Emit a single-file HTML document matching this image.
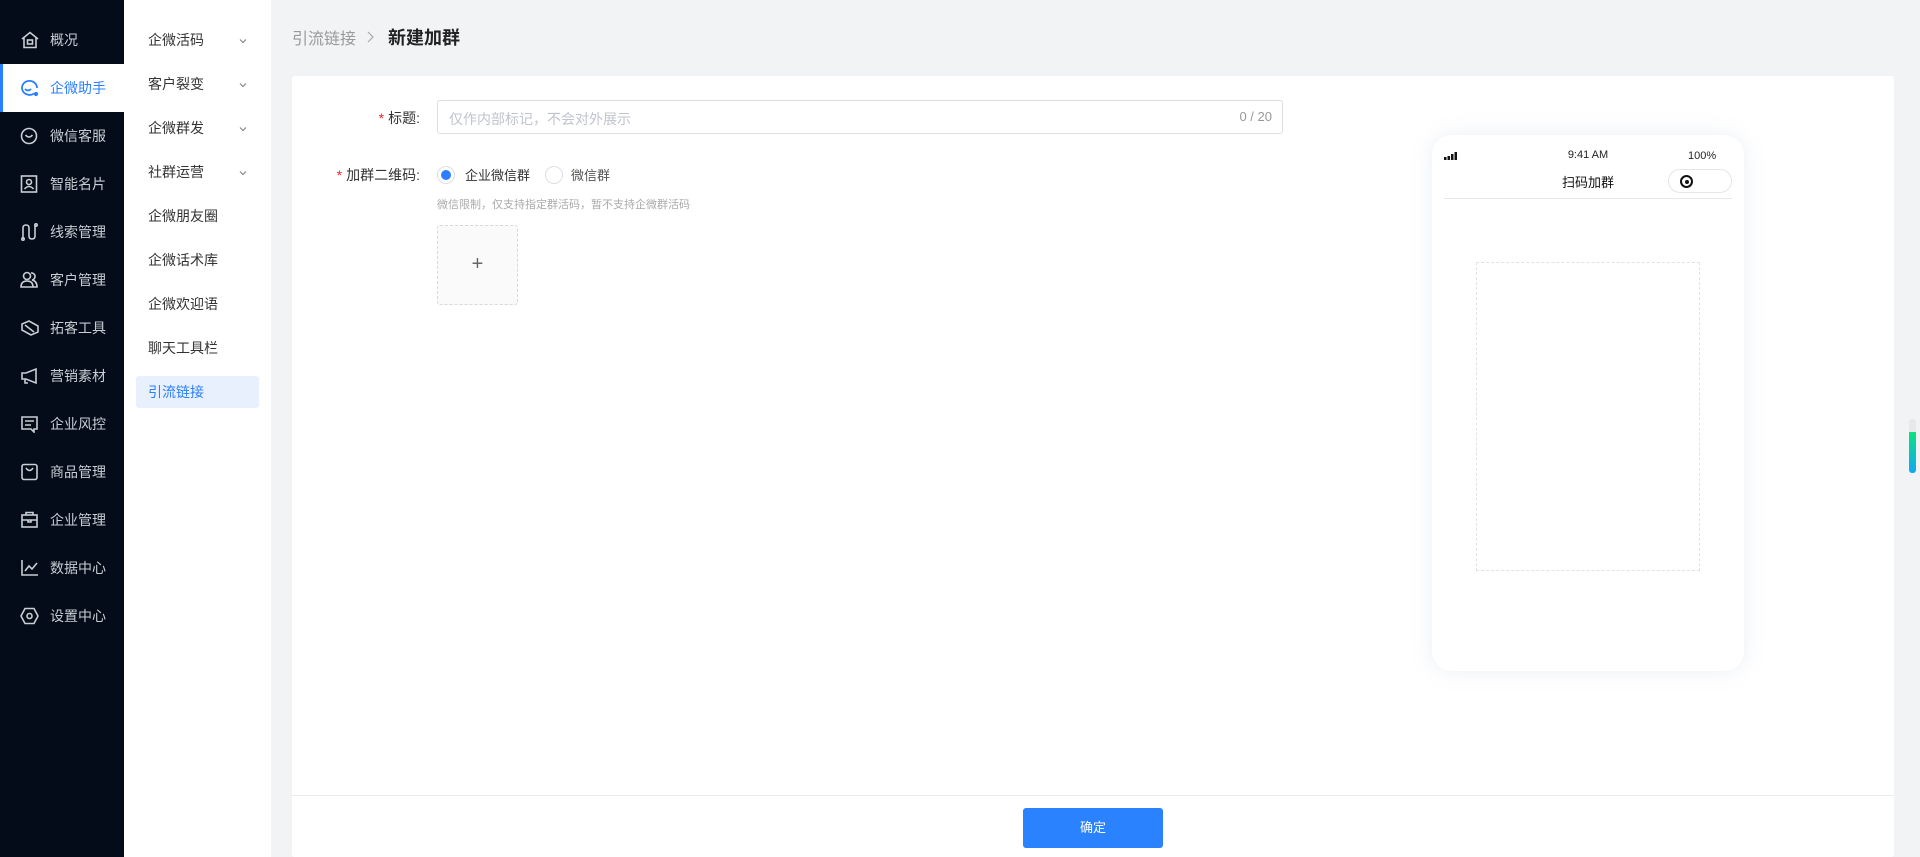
<!DOCTYPE html>
<html><head><meta charset="utf-8"><style>
*{margin:0;padding:0;box-sizing:border-box}
body{width:1920px;height:857px;overflow:hidden;background:#f2f3f5;font-family:"Liberation Sans","Noto Sans CJK SC",sans-serif;position:relative}
.side{position:absolute;left:0;top:0;width:124px;height:857px;background:#030c18}
.si{position:absolute;left:0;width:124px;height:48px;color:#c9cdd4;font-size:14px;display:flex;align-items:center}
.si svg{position:absolute;left:20px;top:15px}
.si span{position:absolute;left:50px}
.si.act{background:#fff;color:#2a7fff}
.si.act:before{content:"";position:absolute;left:0;top:0;width:3px;height:48px;background:#2a7fff}
.sub{position:absolute;left:124px;top:0;width:147px;height:857px;background:#fff}
.sb{position:absolute;left:12px;width:123px;height:32px;font-size:14px;color:#333;display:flex;align-items:center;padding-left:12px}
.sb.act{background:#e8f0fd;color:#2a7fff;border-radius:3px}
.chev{position:absolute;left:102px;top:12px}
.card{position:absolute;left:292px;top:76px;width:1602px;height:781px;background:#fff;border-radius:3px}
.lbl{position:absolute;font-size:14px;color:#333;text-align:right}
.lbl b{color:#f5222d;font-weight:normal;margin-right:4px}
</style></head><body>
<div class="side">
<div class="si" style="top:16px"><svg width="20" height="18" viewBox="0 0 20 18" fill="none" stroke="#c9cdd4" stroke-width="1.6"><path d="M2 8L10 1.5 18 8M4 6.5V16.5H16V6.5"/><rect x="7.5" y="9" width="5" height="4"/></svg><span>概况</span></div>
<div class="si act" style="top:64px"><svg width="20" height="18" viewBox="0 0 20 18" fill="none" stroke="#2a7fff" stroke-width="1.8"><path d="M14 14.5A7.5 7 0 1 1 17 9"/><path d="M5 10q3 3 6 0"/><circle cx="16" cy="15" r="1.2" fill="#2a7fff"/></svg><span>企微助手</span></div>
<div class="si" style="top:112px"><svg width="20" height="18" viewBox="0 0 20 18" fill="none" stroke="#c9cdd4" stroke-width="1.6"><circle cx="9" cy="9" r="7.5"/><path d="M5.5 8q3.5 4 7 0"/></svg><span>微信客服</span></div>
<div class="si" style="top:160px"><svg width="20" height="18" viewBox="0 0 20 18" fill="none" stroke="#c9cdd4" stroke-width="1.6"><rect x="1.5" y="1" width="15" height="16"/><circle cx="9" cy="7" r="2.5"/><path d="M4.5 14q4.5-5 9 0"/></svg><span>智能名片</span></div>
<div class="si" style="top:208px"><svg width="20" height="18" viewBox="0 0 20 18" fill="none" stroke="#c9cdd4" stroke-width="1.6"><path d="M3 16V5q0-3 3-3t3 3v8q0 3 3 3t3-3V2"/><circle cx="3" cy="16" r="1.2"/><circle cx="16" cy="2" r="1.2"/></svg><span>线索管理</span></div>
<div class="si" style="top:256px"><svg width="20" height="18" viewBox="0 0 20 18" fill="none" stroke="#c9cdd4" stroke-width="1.6"><circle cx="7" cy="5" r="3.5"/><path d="M1 16q0-6 6-6t6 6z"/><path d="M11 2a3.5 3.5 0 0 1 1 7q5 1 5 7h-4"/></svg><span>客户管理</span></div>
<div class="si" style="top:304px"><svg width="20" height="18" viewBox="0 0 20 18" fill="none" stroke="#c9cdd4" stroke-width="1.6"><path d="M2 5l7-3 9 5v6l-7 3-9-5z"/><path d="M5 6l9 7"/></svg><span>拓客工具</span></div>
<div class="si" style="top:352px"><svg width="20" height="18" viewBox="0 0 20 18" fill="none" stroke="#c9cdd4" stroke-width="1.6"><path d="M2 6h4l10-4v14L6 12H2z"/><path d="M5 12v4h3"/></svg><span>营销素材</span></div>
<div class="si" style="top:400px"><svg width="20" height="18" viewBox="0 0 20 18" fill="none" stroke="#c9cdd4" stroke-width="1.6"><path d="M2 2h15v12h-3v3l-3-3H2z"/><path d="M5 6h9M5 10h6"/></svg><span>企业风控</span></div>
<div class="si" style="top:448px"><svg width="20" height="18" viewBox="0 0 20 18" fill="none" stroke="#c9cdd4" stroke-width="1.6"><rect x="2" y="1.5" width="15" height="15" rx="2"/><path d="M6 5q3.5 5 7 0"/></svg><span>商品管理</span></div>
<div class="si" style="top:496px"><svg width="20" height="18" viewBox="0 0 20 18" fill="none" stroke="#c9cdd4" stroke-width="1.6"><rect x="2" y="4" width="15" height="12"/><path d="M6 4V1.5h7V4M2 9h15M8 9v2h3V9"/></svg><span>企业管理</span></div>
<div class="si" style="top:544px"><svg width="20" height="18" viewBox="0 0 20 18" fill="none" stroke="#c9cdd4" stroke-width="1.6"><path d="M2 1v15h16M5 12l4-5 3 3 5-6"/></svg><span>数据中心</span></div>
<div class="si" style="top:592px"><svg width="20" height="18" viewBox="0 0 20 18" fill="none" stroke="#c9cdd4" stroke-width="1.6"><path d="M5 1.5h9l4 7.5-4 7.5H5L1 9z"/><circle cx="9.5" cy="9" r="2.5"/></svg><span>设置中心</span></div>
</div>
<div class="sub">
<div class="sb" style="top:24px">企微活码<svg class="chev" width="10" height="10" viewBox="0 0 10 10" fill="none" stroke="#888" stroke-width="1.2"><path d="M2 3.5l3 3 3-3"/></svg></div>
<div class="sb" style="top:68px">客户裂变<svg class="chev" width="10" height="10" viewBox="0 0 10 10" fill="none" stroke="#888" stroke-width="1.2"><path d="M2 3.5l3 3 3-3"/></svg></div>
<div class="sb" style="top:112px">企微群发<svg class="chev" width="10" height="10" viewBox="0 0 10 10" fill="none" stroke="#888" stroke-width="1.2"><path d="M2 3.5l3 3 3-3"/></svg></div>
<div class="sb" style="top:156px">社群运营<svg class="chev" width="10" height="10" viewBox="0 0 10 10" fill="none" stroke="#888" stroke-width="1.2"><path d="M2 3.5l3 3 3-3"/></svg></div>
<div class="sb" style="top:200px">企微朋友圈</div>
<div class="sb" style="top:244px">企微话术库</div>
<div class="sb" style="top:288px">企微欢迎语</div>
<div class="sb" style="top:332px">聊天工具栏</div>
<div class="sb act" style="top:376px">引流链接</div>
</div>
<div style="position:absolute;left:292px;top:25px;font-size:16px;color:#999">引流链接</div>
<svg style="position:absolute;left:365px;top:31px" width="10" height="12" viewBox="0 0 10 12" fill="none" stroke="#aaa" stroke-width="1.2"><path d="M3 1l5 5-5 5"/></svg>
<div style="position:absolute;left:388px;top:24px;font-size:18px;color:#222;font-weight:bold">新建加群</div>
<div class="card"></div>
<div class="lbl" style="left:340px;top:108px;width:80px"><b>*</b>标题:</div>
<div style="position:absolute;left:437px;top:100px;width:846px;height:34px;border:1px solid #dcdfe6;border-radius:3px;font-size:14px;color:#c0c4cc;padding:8px 11px">仅作内部标记，不会对外展示<span style="position:absolute;right:10px;top:8px;color:#999;font-size:13px">0 / 20</span></div>
<div class="lbl" style="left:300px;top:165px;width:120px"><b>*</b>加群二维码:</div>
<div style="position:absolute;left:437px;top:166px;width:18px;height:18px;border:1px solid #dcdfe6;border-radius:50%;background:#fff"><div style="position:absolute;left:3px;top:3px;width:10px;height:10px;border-radius:50%;background:#2a7fff"></div></div>
<div style="position:absolute;left:465px;top:165px;font-size:13px;color:#333">企业微信群</div>
<div style="position:absolute;left:545px;top:166px;width:18px;height:18px;border:1px solid #dcdfe6;border-radius:50%"></div>
<div style="position:absolute;left:571px;top:165px;font-size:13px;color:#555">微信群</div>
<div style="position:absolute;left:437px;top:196px;font-size:11px;color:#aaa">微信限制，仅支持指定群活码，暂不支持企微群活码</div>
<div style="position:absolute;left:437px;top:225px;width:81px;height:80px;border:1px dashed #d9d9d9;border-radius:3px;background:#fafafa;text-align:center;line-height:76px;font-size:20px;color:#666;font-weight:300">+</div>
<div style="position:absolute;left:1432px;top:135px;width:312px;height:536px;background:#fff;border-radius:20px;box-shadow:0 0 20px rgba(180,190,210,.25)">
<svg style="position:absolute;left:12px;top:17px" width="14" height="8"><rect x="0" y="5" width="2.5" height="3" fill="#111"/><rect x="3.5" y="4" width="2.5" height="4" fill="#111"/><rect x="7" y="2" width="2.5" height="6" fill="#111"/><rect x="10.5" y="0" width="2.5" height="8" fill="#111"/></svg>
<div style="position:absolute;left:0;width:312px;top:14px;text-align:center;font-size:11px;color:#222">9:41 AM</div>
<div style="position:absolute;left:256px;top:15px;font-size:11px;color:#222">100%</div>
<div style="position:absolute;left:0;width:312px;top:37px;text-align:center;font-size:13px;color:#111">扫码加群</div>
<div style="position:absolute;left:236px;top:34px;width:64px;height:24px;border:1px solid #e6e6e6;border-radius:12px"><div style="position:absolute;left:11px;top:5px;width:13px;height:13px;border:2px solid #111;border-radius:50%"><div style="position:absolute;left:2.5px;top:2.5px;width:4px;height:4px;background:#111;border-radius:50%"></div></div></div>
<div style="position:absolute;left:12px;top:63px;width:288px;height:1px;background:#e8e8e8"></div>
<div style="position:absolute;left:44px;top:127px;width:224px;height:309px;border:1px dashed #e2e2e2"></div>
</div>
<div style="position:absolute;left:292px;top:795px;width:1602px;height:1px;background:#ebebeb"></div>
<div style="position:absolute;left:1023px;top:808px;width:140px;height:40px;background:#2a82ff;border-radius:3px;color:#fff;font-size:13px;text-align:center;line-height:40px">确定</div>
<div style="position:absolute;left:1909px;top:419px;width:7px;height:14px;background:#e8e8e8;border-radius:3px 3px 0 0"></div>
<div style="position:absolute;left:1909px;top:432px;width:7px;height:41px;background:linear-gradient(#0be27f,#10a7f5);border-radius:0 0 3px 3px"></div>
</body></html>
